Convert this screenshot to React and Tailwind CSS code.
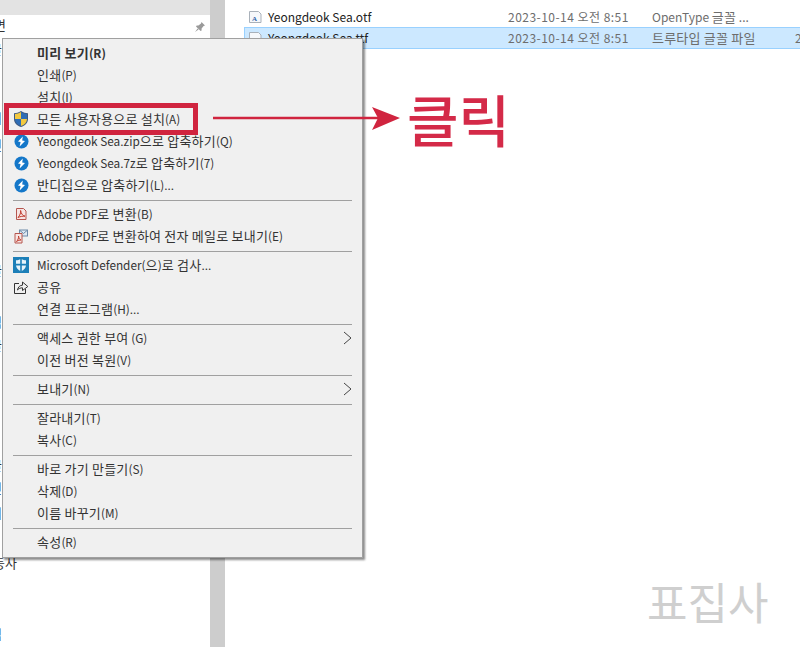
import React from "react";

const FONT = "font-['Noto_Sans_CJK_KR','Noto_Sans',sans-serif]";

function Mixed({ children }) {
  const parts = String(children).split(/([\uAC00-\uD7A3]+(?: [\uAC00-\uD7A3]+)*)/);
  return (
    <>
      {parts.map((p, i) =>
        i % 2 === 1 ? (
          <span key={i} className="text-[13px] tracking-[0.22px]">{p}</span>
        ) : (
          <span key={i}>{p}</span>
        )
      )}
    </>
  );
}

function Shield() {
  return (
    <svg width="16" height="18" viewBox="0 0 16 18">
      <path d="M8 1 C5.5 2.6 3.5 3.2 1 3.2 V9 C1 13 4 15.6 8 17 C12 15.6 15 13 15 9 V3.2 C12.5 3.2 10.5 2.6 8 1Z" fill="#3f5a80" />
      <path d="M8 2 V9 H14 V3.9 C11.8 3.9 10 3.2 8 2Z" fill="#2f6db5" />
      <path d="M8 2 V9 H2 V3.9 C4.2 3.9 6 3.2 8 2Z" fill="#f3c93f" />
      <path d="M8 9 V16 C11.4 14.8 13.8 12.6 14 9Z" fill="#f3c93f" />
      <path d="M8 9 V16 C4.6 14.8 2.2 12.6 2 9Z" fill="#2f6db5" />
    </svg>
  );
}

function Bandizip() {
  return (
    <svg width="15" height="15" viewBox="0 0 15 15">
      <circle cx="7.5" cy="7.5" r="7" fill="#1477c9" />
      <path d="M8.8 2.6 L4 7.6 L6.6 8 L5.6 12.4 L11 7 L8.2 6.6 Z" fill="#fff" />
    </svg>
  );
}

function PdfOne() {
  return (
    <svg width="14" height="14" viewBox="0 0 14 14">
      <path d="M2.5 1.5 H9.5 L12 4 V12.5 H2.5Z" fill="#f7e4e2" stroke="#b5564f" />
      <path d="M4 10.5 C6 8.5 7 5.5 6.6 3.5 C6.8 6 8.5 8.8 11 9.2 C8.5 9 6 9.6 4 10.5Z" fill="none" stroke="#c0392b" />
    </svg>
  );
}

function PdfTwo() {
  return (
    <svg width="16" height="15" viewBox="0 0 16 15">
      <rect x="6.5" y="1" width="8" height="6" fill="#dfe8f1" stroke="#6c89a8" />
      <path d="M7 1.5 L10.5 4.5 L14 1.5" fill="none" stroke="#6c89a8" />
      <path d="M2 4.5 H9 V14 H2Z" fill="#f7e4e2" stroke="#b5564f" />
      <path d="M3.5 12.5 C5 11 5.8 9 5.5 7 C5.8 9 6.8 10.6 8 11 C6.5 11 5 11.5 3.5 12.5Z" fill="none" stroke="#c0392b" />
    </svg>
  );
}

function Defender() {
  return (
    <svg width="16" height="16" viewBox="0 0 16 16">
      <rect width="16" height="16" fill="#1c7fb8" />
      <path d="M8 2 C6 3 4.5 3.3 3 3.3 V8 C3 11 5 13 8 14.3 C11 13 13 11 13 8 V3.3 C11.5 3.3 10 3 8 2Z" fill="#e6f3fa" />
      <path d="M7.2 2 H8.8 V14 H7.2Z M3 6.8 H13 V8.4 H3Z" fill="#1c7fb8" />
    </svg>
  );
}

function Share() {
  return (
    <svg width="16" height="15" viewBox="0 0 16 15" fill="none" stroke="#333" strokeWidth="1">
      <path d="M6 3.5 H1.5 V13.5 H12.5 V9" />
      <path d="M4.5 10 C5 7 7 5.2 9.5 5.2 V2 L14.8 6.5 L9.5 10.5 V7.8 C7.5 7.8 5.8 8.5 4.5 10Z" />
    </svg>
  );
}

function FontFile() {
  return (
    <svg width="16" height="16" viewBox="0 0 16 16">
      <path d="M2.5 2.5 H11.5 L14 5 V13.5 H2.5Z" fill="#f6f8fb" stroke="#a9b1ba" />
      <text x="5" y="11.5" fontSize="7" fontFamily="Liberation Serif" fontWeight="700" fill="#2f5fa8">A</text>
    </svg>
  );
}

function Row({ icon, children, bold, arrow }) {
  return (
    <div className={`relative flex h-[22px] items-center pl-[34px] text-[11.8px] text-[#333] ${bold ? "font-bold" : ""}`}>
      {icon && <span className="absolute left-[10px] top-0 flex h-[22px] w-[16px] items-center justify-center">{icon}</span>}
      <span className="whitespace-nowrap"><Mixed>{children}</Mixed></span>
      {arrow && (
        <svg className="absolute right-[10px] top-[4px]" width="9" height="14" viewBox="0 0 9 14" fill="none" stroke="#444" strokeWidth="1">
          <path d="M1 1 L8 7 L1 13" />
        </svg>
      )}
    </div>
  );
}

function Sep() {
  return <div className="mb-[2px] ml-[10px] mr-[10px] mt-[4px] h-px bg-[#a0a0a0]" />;
}

export default function App() {
  return (
    <div className={`relative flex h-[647px] w-[800px] overflow-hidden bg-white ${FONT}`}>
      <aside className="flex h-full w-[210px] shrink-0 flex-col">
        <div className="h-[15px] bg-[#e3e3e3]" />
        <div className="relative flex-1 overflow-hidden pt-[1px] text-[13px] leading-[18px] text-[#333]">
          <div className="-ml-[6px]">면</div>
          <div className="-ml-[10px] mt-[6px]">글</div>
          <div className="-ml-[10px] mt-[51px]">서</div>
          <div className="-ml-[10px] mt-[9px]">면</div>
          <div className="-ml-[10px] mt-[107px]">글</div>
          <div className="-ml-[10px] mt-[34px]">적</div>
          <div className="-ml-[10px] mt-[5px]">글</div>
          <div className="-ml-[10px] mt-[102px]">글</div>
          <div className="-ml-[10px] mt-[5px]">면</div>
          <div className="-ml-[10px] mt-[7px]">서</div>
          <div className="-ml-[7px] mt-[32px]">동사</div>
          <div className="-ml-[10px] mt-[53px]">멈</div>
          <svg className="absolute right-[4px] top-[6px]" width="12" height="12" viewBox="0 0 12 12" fill="#9a9a9a">
            <path d="M7.5 1 L11 4.5 L9.6 5 L7.6 7.6 L7.6 9.4 L6.6 10 L2 5.4 L2.7 4.4 L4.4 4.4 L7 2.4Z M3.6 7.4 L4.6 8.4 L1 11Z" />
          </svg>
        </div>
      </aside>
      <div className="h-full w-[15px] shrink-0 bg-[#cdcdcd]" />
      <main className="flex-1 pl-[19px] pt-[6px] text-[12px]">
        <div className="flex h-[21px] items-center pl-[3px]">
          <FontFile />
          <span className="ml-[5px] w-[240px] text-[#222]">Yeongdeok Sea.otf</span>
          <span className="w-[144px] whitespace-nowrap tracking-[0.47px] text-[#6d6d6d]">2023-10-14 오전 8:51</span>
          <span className="text-[#6d6d6d]"><Mixed>OpenType 글꼴 ...</Mixed></span>
        </div>
        <div className="flex h-[22px] items-center border border-[#99d1ff] bg-[#cce8ff] pl-[2px]">
          <FontFile />
          <span className="ml-[5px] w-[240px] text-[#222]">Yeongdeok Sea.ttf</span>
          <span className="w-[144px] whitespace-nowrap tracking-[0.47px] text-[#6d6d6d]">2023-10-14 오전 8:51</span>
          <span className="w-[143px] text-[#6d6d6d]"><Mixed>트루타입 글꼴 파일</Mixed></span>
          <span className="text-[#6d6d6d]">2</span>
        </div>
      </main>

      <div className="absolute left-[2px] top-[38px] w-[361px] border border-[#a0a0a0] bg-[#f0f0f0] pb-[4px] pt-[3px] shadow-[2px_2px_2px_rgba(0,0,0,0.45)]">
        <Row bold>미리 보기(R)</Row>
        <Row>인쇄(P)</Row>
        <Row>설치(I)</Row>
        <Row icon={<Shield />}>모든 사용자용으로 설치(A)</Row>
        <Row icon={<Bandizip />}>Yeongdeok Sea.zip으로 압축하기(Q)</Row>
        <Row icon={<Bandizip />}>Yeongdeok Sea.7z로 압축하기(7)</Row>
        <Row icon={<Bandizip />}>반디집으로 압축하기(L)...</Row>
        <Sep />
        <Row icon={<PdfOne />}>Adobe PDF로 변환(B)</Row>
        <Row icon={<PdfTwo />}>Adobe PDF로 변환하여 전자 메일로 보내기(E)</Row>
        <Sep />
        <Row icon={<Defender />}>Microsoft Defender(으)로 검사...</Row>
        <Row icon={<Share />}>공유</Row>
        <Row>연결 프로그램(H)...</Row>
        <Sep />
        <Row arrow>액세스 권한 부여 (G)</Row>
        <Row>이전 버전 복원(V)</Row>
        <Sep />
        <Row arrow>보내기(N)</Row>
        <Sep />
        <Row>잘라내기(T)</Row>
        <Row>복사(C)</Row>
        <Sep />
        <Row>바로 가기 만들기(S)</Row>
        <Row>삭제(D)</Row>
        <Row>이름 바꾸기(M)</Row>
        <Sep />
        <Row>속성(R)</Row>
      </div>

      <div className="absolute left-[4px] top-[103px] h-[32px] w-[194px] border-[5px] border-[#d0243f]" />
      <svg className="absolute left-[213px] top-[104px]" width="188" height="28" viewBox="0 0 188 28">
        <path d="M0 14 H165" stroke="#d0243f" strokeWidth="2.5" />
        <path d="M159 3 L187 14 L159 26 L165 14Z" fill="#d0243f" />
      </svg>
      <div className="absolute left-[407px] top-[78px] text-[56px] font-medium leading-[80px] text-[#d42a48]">클릭</div>
      <div className="absolute left-[647px] top-[571px] text-[44px] leading-[60px] text-[#cfcfcf]">표집사</div>
    </div>
  );
}
